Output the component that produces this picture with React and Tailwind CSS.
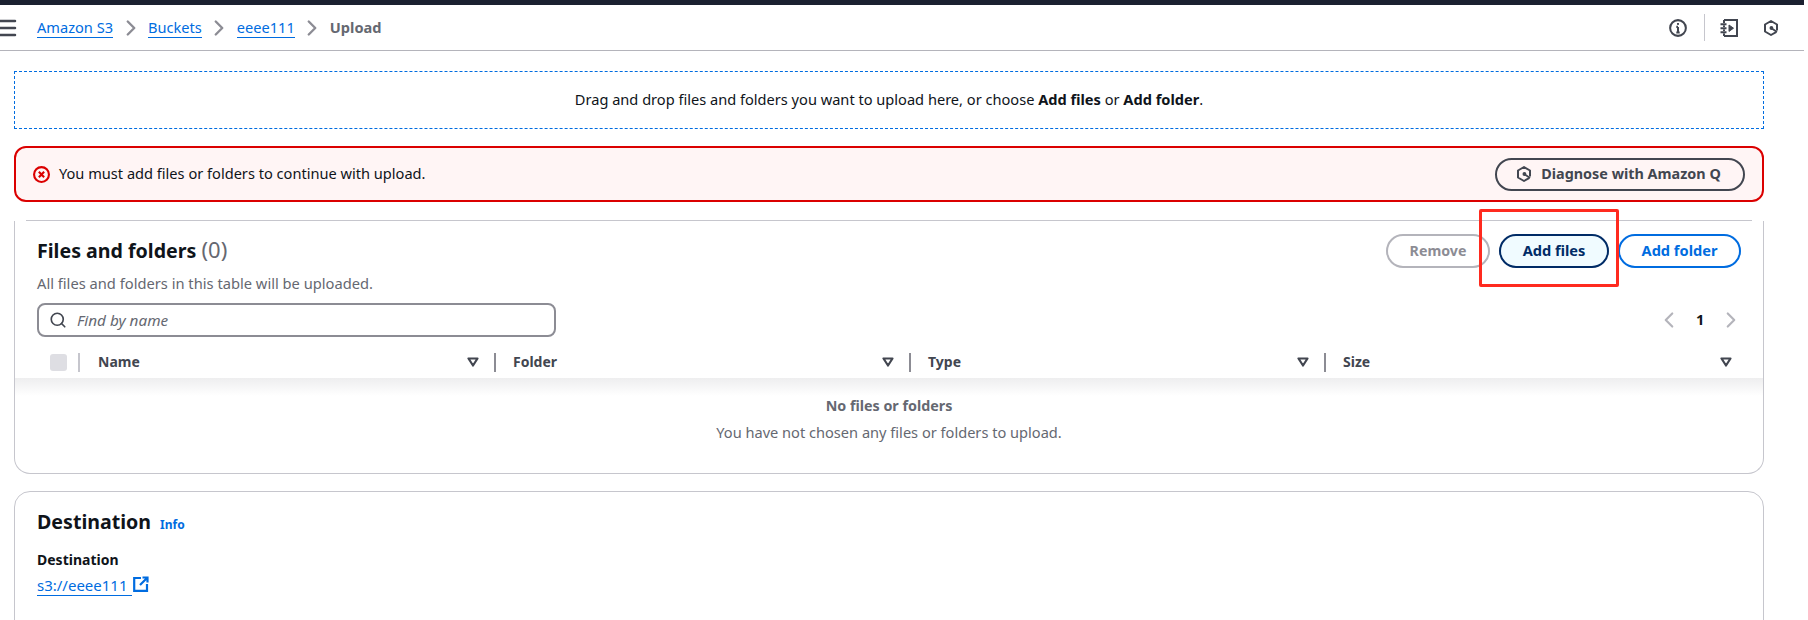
import React from 'react'
import { Search, ChevronLeft, ChevronRight, Menu } from 'lucide-react'

const font = { fontFamily: '"Noto Sans", sans-serif' }

// Amazon Q hexagon mark
function QIcon({ className }) {
  return (
    <svg viewBox="0 0 16 16" fill="none" className={className} stroke="currentColor" strokeWidth="2" strokeLinejoin="round" strokeLinecap="round">
      <path d="M12.6 12.3 8 15 2 11.5v-7L8 1l6 3.5v5.2" />
      <circle cx="8.4" cy="8" r="1.9" fill="currentColor" stroke="none" />
      <path d="M8.4 8.2l5 3.4" strokeWidth="1.8" />
    </svg>
  )
}

function FilterIcon() {
  return (
    <svg viewBox="0 0 12 10" className="w-[12px] h-[10px] text-[#424650]" fill="none" stroke="currentColor" strokeWidth="2.2" strokeLinejoin="round">
      <path d="M1.5 1.5h9L6 8.5z" />
    </svg>
  )
}

function Crumb({ children }) {
  return <a className="text-[#006ce0] border-b border-[#006ce0] leading-[19px]">{children}</a>
}

function Sep() {
  return <ChevronRight className="w-[26px] h-[26px] text-[#8c8c94] mx-[4.5px]" strokeWidth={2.2} />
}

function Col({ name, last }) {
  return (
    <div className="w-[415px] h-full flex items-center">
      <span className="-ml-[1px] text-[14px] font-bold text-[#424650] leading-none">{name}</span>
      <div className={`ml-auto flex items-center ${last ? 'mr-[27px]' : ''}`}>
        <FilterIcon />
        {!last && <div className="w-[2px] h-[19px] bg-[#8c8c94] ml-[15px] mr-[18px]" />}
      </div>
    </div>
  )
}

export default function App() {
  return (
    <div className="w-[1808px] h-[620px] overflow-hidden bg-white text-[14.6px] text-[#0f141a]" style={font}>
      <div className="w-[1804px]">
        <div className="h-[5px] bg-[#1b2130]" />

        {/* breadcrumb bar */}
        <div className="h-[46px] border-b border-[#b4b4bb] flex items-center">
          <Menu className="w-[24px] h-[24px] text-[#424650] ml-[-5px]" strokeWidth={2.5} />
          <div className="flex items-center ml-[18px]">
            <Crumb>Amazon S3</Crumb>
            <Sep />
            <Crumb>Buckets</Crumb>
            <Sep />
            <Crumb>eeee111</Crumb>
            <Sep />
            <span className="font-bold text-[#656871]">Upload</span>
          </div>
          <div className="ml-auto flex items-center text-[#424650]">
            <svg viewBox="0 0 16 16" className="w-[18px] h-[18px]" fill="none" stroke="currentColor" strokeWidth="1.8">
              <circle cx="8" cy="8" r="7" />
              <path d="M8 7v5M6.5 12h3M6.5 7H8" />
              <path d="M8 3.6v1.6" />
            </svg>
            <div className="w-px h-[27px] bg-[#c6c6cd] ml-[17px] mr-[15px]" />
            <svg viewBox="0 0 18 18" className="w-[18px] h-[18px]" fill="none" stroke="currentColor" strokeWidth="2">
              <path d="M4 1h13v16H4" />
              <path d="M4 1v3M4 6.5v1.5M4 10.5v1.5M4 14.5v2.5M0.5 5.2h6M0.5 9.2h6M0.5 13.2h6" />
              <path d="M9 6l4.5 3.2L9 12.4z" fill="currentColor" strokeWidth="1" strokeLinejoin="round" />
            </svg>
            <QIcon className="w-[16px] h-[16px] ml-[25px] mr-[25px]" />
          </div>
        </div>

        <div className="pl-[14px] pr-[40px]">
          {/* drop zone */}
          <div className="mt-[20px] h-[58px] border border-dashed border-[#006ce0] flex items-center justify-center">
            <p>Drag and drop files and folders you want to upload here, or choose <b>Add files</b> or <b>Add folder</b>.</p>
          </div>

          {/* error alert */}
          <div className="mt-[17px] h-[56px] border-2 border-[#db0000] rounded-[12px] bg-[#fff5f5] flex items-center pl-[17px] pr-[17px]">
            <svg viewBox="0 0 16 16" className="w-[17px] h-[17px] text-[#db0000]" fill="none" stroke="currentColor" strokeWidth="2">
              <circle cx="8" cy="8" r="7" />
              <path d="M5.5 5.5l5 5M10.5 5.5l-5 5" />
            </svg>
            <span className="ml-[9px]">You must add files or folders to continue with upload.</span>
            <button className="ml-auto w-[250px] h-[33px] pr-[3px] rounded-full border-2 border-[#424650] font-bold text-[#424650] text-[14.4px] flex items-center justify-center gap-[9px]">
              <QIcon className="w-[16px] h-[16px]" />
              Diagnose with Amazon Q
            </button>
          </div>

          {/* files table */}
          <div className="mt-[18px] mx-[12px] h-px bg-[#c6c6cd]" />
          <div className="h-[253px] border-x border-b border-[#c6c6cd] rounded-b-[16px]">
            <div className="flex justify-between pt-[13px] pl-[22px] pr-[22px]">
              <div>
                <h2 className="text-[19.6px] font-bold leading-[33px] text-[#0f141a]">
                  Files and folders <span className="font-normal text-[22px] leading-none text-[#656871]">(0)</span>
                </h2>
                <p className="mt-[6px] text-[14.7px] leading-[20px] text-[#656871]">All files and folders in this table will be uploaded.</p>
              </div>
              <div className="flex gap-[9px] h-[34px]">
                <button className="w-[104px] rounded-full border-2 border-[#b4b4bb] font-bold text-[#8c8c94] text-[14.2px]">Remove</button>
                <button className="w-[110px] rounded-full border-2 border-[#002b66] bg-[#f0fbff] font-bold text-[#002b66]">Add files</button>
                <button className="w-[123px] rounded-full border-2 border-[#006ce0] font-bold text-[#006ce0]">Add folder</button>
              </div>
            </div>

            <div className="flex items-center justify-between mt-[10px] pl-[22px] pr-[19px]">
              <div className="w-[519px] h-[34px] border-2 border-[#8c8c94] rounded-[8px] flex items-center pl-[10px]">
                <Search className="w-[18px] h-[18px] text-[#424650]" strokeWidth={2.2} />
                <span className="ml-[10px] italic text-[15.3px] text-[#656871]">Find by name</span>
              </div>
              <div className="flex items-center">
                <ChevronLeft className="w-[26px] h-[26px] text-[#b4b4bb]" strokeWidth={2} />
                <span className="mx-[14px] w-[8px] text-center font-bold text-[#0f141a]">1</span>
                <ChevronRight className="w-[26px] h-[26px] text-[#b4b4bb]" strokeWidth={2} />
              </div>
            </div>

            <div className="h-[36px] mt-[5px] pt-[4px] flex items-center pl-[35px]">
              <div className="w-[17px] h-[17px] rounded-[3px] bg-[#dedee3]" />
              <div className="w-[2px] h-[19px] bg-[#c6c6cd] ml-[11px] mr-[19px]" />
              <div className="flex h-full">
                <Col name="Name" />
                <Col name="Folder" />
                <Col name="Type" />
                <Col name="Size" last />
              </div>
            </div>

            <div className="bg-linear-to-b from-[#eeeeef] to-white bg-[length:100%_18px] bg-no-repeat text-center pt-[18px]">
              <p className="font-bold text-[14.3px] text-[#656871] leading-[20px]">No files or folders</p>
              <p className="mt-[6px] text-[#656871] leading-[20px]">You have not chosen any files or folders to upload.</p>
            </div>
          </div>

          {/* destination */}
          <div className="mt-[17px] h-[200px] border border-[#c6c6cd] rounded-[16px] pt-[13px] pl-[22px]">
            <div className="flex items-baseline">
              <h2 className="text-[19.6px] font-bold leading-[34px]">Destination</h2>
              <a className="ml-[9px] text-[12px] font-bold text-[#006ce0]">Info</a>
            </div>
            <p className="mt-[11px] text-[14px] font-bold leading-[20px]">Destination</p>
            <div className="mt-[5px] flex items-center">
              <a className="text-[#006ce0] text-[15px] border-b border-[#006ce0] pr-[4px] leading-[20px]">s3://eeee111</a>
              <svg viewBox="0 0 16 16" className="w-[16px] h-[16px] text-[#006ce0] ml-[1px] -mt-[3px]" fill="none" stroke="currentColor" strokeWidth="2.2">
                <path d="M8 2H1.2v12.8H14V8" />
                <path d="M7 9l7-7M9.5 1.5H14.5V6.5" />
              </svg>
            </div>
          </div>
        </div>
      </div>

      {/* red annotation drawn over the screenshot */}
      <div className="absolute left-[1479px] top-[209px] w-[140px] h-[78px] border-[3px] border-[#ff2a1f] rounded-[2px]" />
    </div>
  )
}
